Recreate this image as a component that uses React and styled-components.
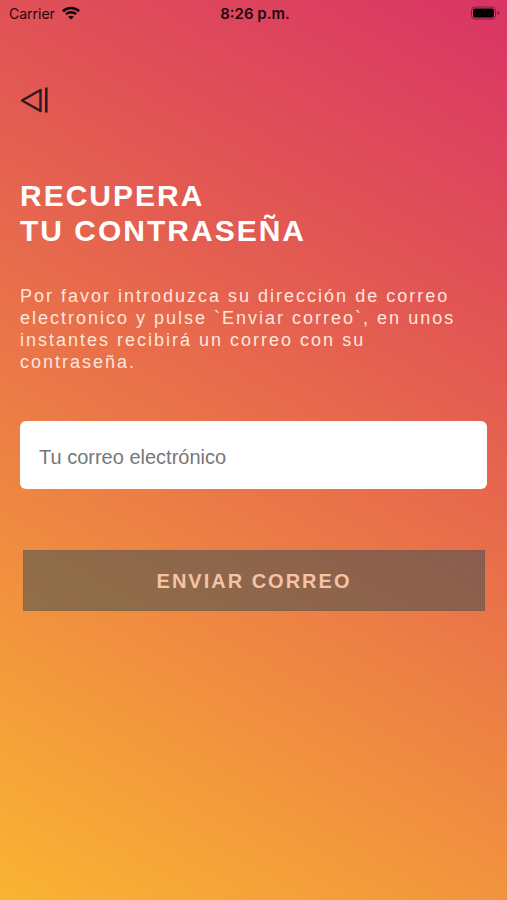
import React, { useState } from 'react'
import styled, { createGlobalStyle } from 'styled-components'

const GlobalStyle = createGlobalStyle`
  * {
    box-sizing: border-box;
  }
  body {
    margin: 0;
    font-family: "Liberation Sans", Arial, sans-serif;
  }
`

const Screen = styled.div`
  min-height: 100vh;
  background: linear-gradient(30deg, #fab432 0%, #e35a52 68%, #d93465 100%);
`

const StatusBar = styled.header`
  display: grid;
  grid-template-columns: 1fr auto 1fr;
  align-items: center;
  height: 26px;
  padding: 0 6px 0 9px;
  font-family: Inter, "Liberation Sans", sans-serif;
  font-size: 14px;
  color: #1c0a10;
`

const Carrier = styled.div`
  display: flex;
  align-items: center;
  gap: 7px;
`

const Clock = styled.time`
  font-size: 15px;
  font-weight: 600;
`

const Battery = styled.svg`
  justify-self: end;
`

const Content = styled.main`
  padding: 58px 20px 40px;
`

const BackButton = styled.button`
  display: block;
  padding: 0;
  border: 0;
  background: none;
  color: #2b1a1c;
  cursor: pointer;
  svg {
    display: block;
  }
`

const Title = styled.h1`
  margin: 62px 0 0;
  font-size: 30px;
  line-height: 35px;
  font-weight: 700;
  letter-spacing: 2px;
  color: #fff;
`

const Description = styled.p`
  margin: 37px 0 0;
  font-size: 18px;
  line-height: 22px;
  letter-spacing: 2px;
  color: #ffe6dc;
`

const EmailInput = styled.input`
  display: block;
  width: 100%;
  height: 68px;
  margin-top: 48px;
  padding: 4px 19px 0;
  border: 0;
  border-radius: 6px;
  background: #fff;
  font-family: inherit;
  font-size: 20px;
  color: #333;
  &::placeholder {
    color: #777;
    opacity: 1;
  }
`

const SubmitRow = styled.div`
  padding: 61px 2px 0 3px;
`

const SubmitButton = styled.button`
  display: block;
  width: 100%;
  height: 61px;
  padding: 2px 0 0;
  border: 1px solid rgba(48, 75, 82, 0.1);
  background: rgba(48, 75, 82, 0.5);
  font-family: inherit;
  font-size: 20px;
  font-weight: 700;
  letter-spacing: 2px;
  color: #f6c3a6;
  cursor: pointer;
`

const App = () => {
  const [email, setEmail] = useState('')

  const handleSubmit = (e) => {
    e.preventDefault()
  }

  return (
    <Screen>
      <GlobalStyle />
      <StatusBar>
        <Carrier>
          <span>Carrier</span>
          <svg width="18" height="14" viewBox="0 0 18 14" fill="none" stroke="#0c0306" aria-hidden="true">
            <path d="M0.9 5.2C5.4 0.9 12.6 0.9 17.1 5.2" strokeWidth="2.6" />
            <path d="M3.9 8.2C6.8 5.5 11.2 5.5 14.1 8.2" strokeWidth="2.4" />
            <path d="M9 13.6L6.2 10.8C7.8 9.3 10.2 9.3 11.8 10.8Z" fill="#0c0306" stroke="none" />
          </svg>
        </Carrier>
        <Clock>8:26 p.m.</Clock>
        <Battery width="31" height="14" viewBox="0 0 31 14" aria-hidden="true">
          <rect x="1.5" y="1" width="24" height="12" rx="3.5" fill="none" stroke="#7c1d3c" />
          <rect x="3" y="2.5" width="21" height="9" rx="2" fill="#000" />
          <path d="M27.5 5v4c1.4-.5 2-1.2 2-2s-.6-1.5-2-2z" fill="#7c1d3c" />
        </Battery>
      </StatusBar>
      <Content>
        <BackButton type="button" aria-label="Volver">
          <svg width="29" height="32" viewBox="0 0 29 32" fill="none" stroke="currentColor">
            <path d="M20.5 6L2 16.5L20.5 27Z" strokeWidth="2.4" strokeLinejoin="round" />
            <path d="M26.300 3.5V28.5" strokeWidth="2.6" />
          </svg>
        </BackButton>
        <Title>
          RECUPERA
          <br />
          TU CONTRASEÑA
        </Title>
        <Description>
          Por favor introduzca su dirección de correo electronico y pulse `Enviar correo`, en unos instantes recibirá un
          correo con su contraseña.
        </Description>
        <form onSubmit={handleSubmit}>
          <EmailInput
            type="email"
            aria-label="Tu correo electrónico"
            placeholder="Tu correo electrónico"
            value={email}
            onChange={(e) => setEmail(e.target.value)}
          />
          <SubmitRow>
            <SubmitButton type="submit">ENVIAR CORREO</SubmitButton>
          </SubmitRow>
        </form>
      </Content>
    </Screen>
  )
}

export default App
